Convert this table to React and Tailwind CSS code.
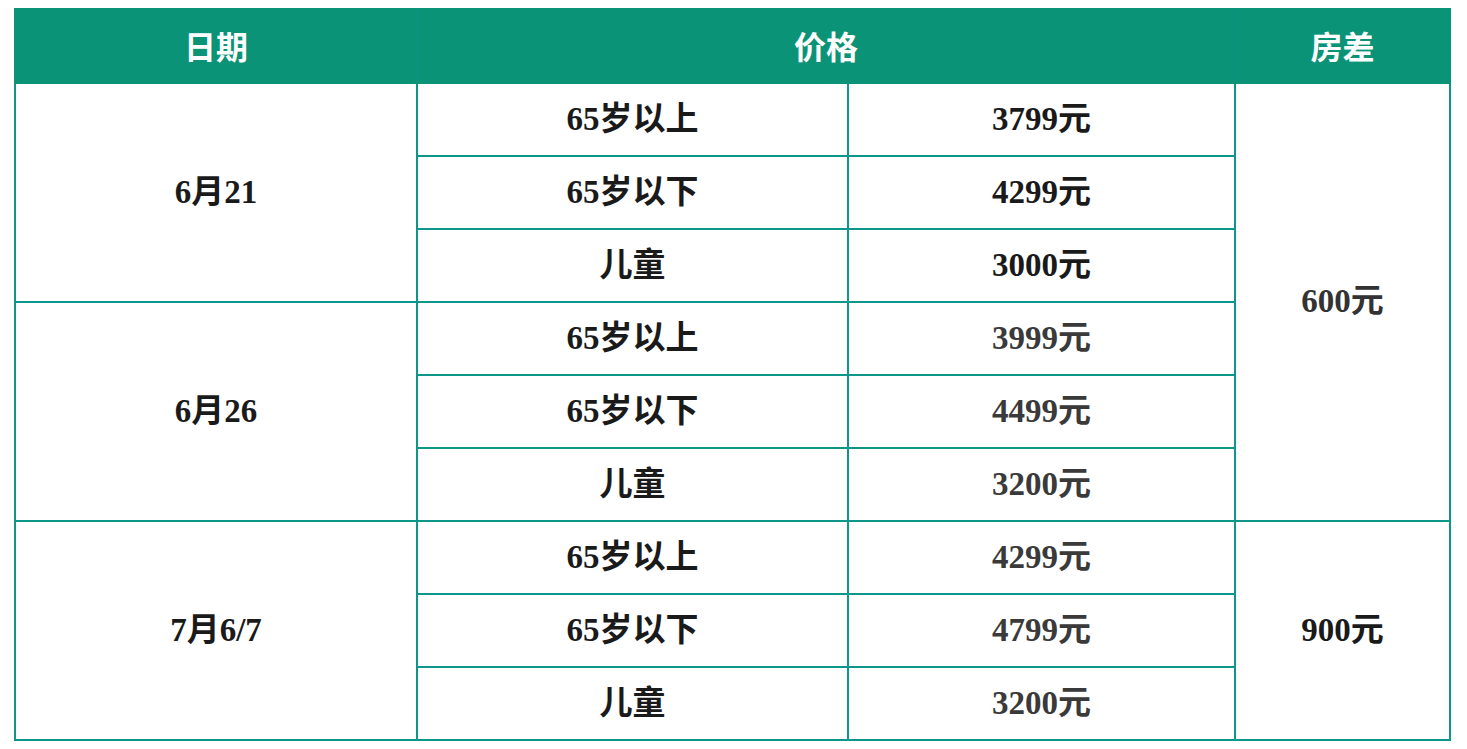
const groups = [
    {
        date: '6月21',
        rows: [
            { label: '65岁以上', price: '3799元', grey: false },
            { label: '65岁以下', price: '4299元', grey: false },
            { label: '儿童', price: '3000元', grey: false },
        ],
    },
    {
        date: '6月26',
        rows: [
            { label: '65岁以上', price: '3999元', grey: true },
            { label: '65岁以下', price: '4499元', grey: true },
            { label: '儿童', price: '3200元', grey: true },
        ],
    },
    {
        date: '7月6/7',
        rows: [
            { label: '65岁以上', price: '4299元', grey: true },
            { label: '65岁以下', price: '4799元', grey: true },
            { label: '儿童', price: '3200元', grey: true },
        ],
    },
];

const cell = 'border-2 border-[#0d978a] text-center align-middle h-[73px] p-0';
const bodyFont = { fontFamily: '"Liberation Serif", "Noto Sans CJK SC", serif' };

const App = () => {
    return (
        <div className="min-h-[749px] bg-white pt-[8px] pl-[14px]">
            <table className="table-fixed border-collapse w-[1435px]" style={bodyFont}>
                <colgroup>
                    <col className="w-[402px]" />
                    <col className="w-[431px]" />
                    <col className="w-[387px]" />
                    <col className="w-[215px]" />
                </colgroup>
                <thead>
                    <tr className="bg-[#0b9377] text-white text-[32px] font-bold h-[74px]" style={{ fontFamily: '"Noto Sans CJK SC", sans-serif' }}>
                        <th className="border-2 border-[#0b9377] border-r-[#0e9182] p-0 pb-[3px] leading-none">日期</th>
                        <th colSpan={2} className="border-2 border-[#0b9377] border-r-[#0e9182] p-0 pb-[3px] leading-none">价格</th>
                        <th className="border-2 border-[#0b9377] p-0 pb-[3px] leading-none">房差</th>
                    </tr>
                </thead>
                <tbody className="text-[33px] font-bold">
                    {groups.map((g, gi) =>
                        g.rows.map((r, ri) => (
                            <tr key={`${gi}-${ri}`}>
                                {ri === 0 && (
                                    <td rowSpan={3} className={`${cell} text-[#1a1a1a]`}>{g.date}</td>
                                )}
                                <td className={`${cell} text-[#1a1a1a]`}>{r.label}</td>
                                <td className={`${cell} ${r.grey ? 'text-[#3a3a3a]' : 'text-[#1a1a1a]'}`}>{r.price}</td>
                                {gi === 0 && ri === 0 && (
                                    <td rowSpan={6} className={`${cell} text-[#333333]`}>600元</td>
                                )}
                                {gi === 2 && ri === 0 && (
                                    <td rowSpan={3} className={`${cell} text-[#1a1a1a]`}>900元</td>
                                )}
                            </tr>
                        ))
                    )}
                </tbody>
            </table>
        </div>
    );
};

export default App;
